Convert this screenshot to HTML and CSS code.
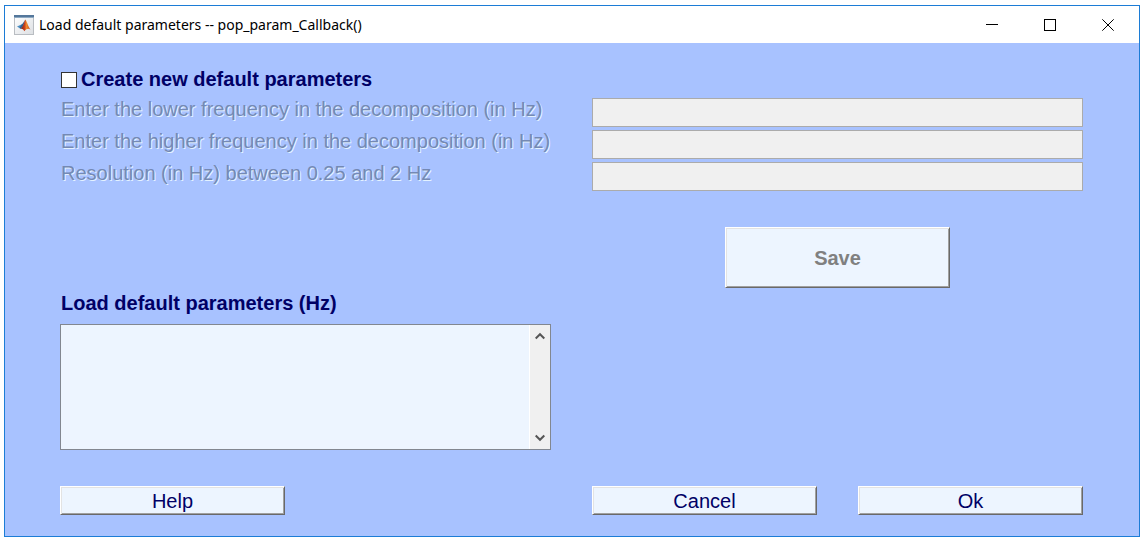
FILE: index.html
```html
<!DOCTYPE html>
<html lang="en">
<head>
<meta charset="utf-8">
<title>Load default parameters -- pop_param_Callback()</title>
<link rel="stylesheet" href="styles.css">
</head>
<body>
<main class="window">
  <header class="titlebar">
    <svg class="app-icon" viewBox="0 0 20 20" aria-hidden="true">
      <defs>
        <linearGradient id="paper" x1="0" y1="0" x2="1" y2="1"><stop offset="0" stop-color="#fff"/><stop offset="1" stop-color="#dcdfe3"/></linearGradient>
        <linearGradient id="flame" x1="0" y1="0" x2="1" y2="0"><stop offset="0" stop-color="#7a1f12"/><stop offset=".4" stop-color="#c8401c"/><stop offset=".6" stop-color="#f08a2c"/><stop offset="1" stop-color="#c5401a"/></linearGradient>
      </defs>
      <rect x=".5" y=".5" width="19" height="19" fill="url(#paper)" stroke="#b9bdc2"/>
      <rect width="20" height="2" fill="#54779b"/>
      <rect y="2" width="20" height="1" fill="#8da9c2"/>
      <path d="M3 11.600 7.500 9.400 9.400 10.800 6.600 13.800Z" fill="#4a8cc0"/>
      <path d="M7.500 9.400C9 9 9.800 6.500 11.300 4.800L9.400 10.800 6.600 13.800 5.600 13.100Z" fill="#2c6294"/>
      <path d="M11.300 4.600C13 6.500 14.200 12 16.500 14.600 14.500 13.200 13 13.200 10.300 16.200 9.500 14.500 8.500 13.400 6.600 13.800 9 12 10 8 11.300 4.600Z" fill="url(#flame)"/>
    </svg>
    <h1 class="title">Load default parameters -- pop_param_Callback()</h1>
    <div class="window-controls">
      <button class="window-button" type="button" aria-label="Minimize"><svg viewBox="0 0 12 12" shape-rendering="crispEdges"><path d="M0 5.500H12"/></svg></button>
      <button class="window-button" type="button" aria-label="Maximize"><svg viewBox="0 0 12 12" shape-rendering="crispEdges"><path d="M.5.5H11.500V11.500H.5Z"/></svg></button>
      <button class="window-button" type="button" aria-label="Close"><svg viewBox="0 0 12 12"><path d="M.3.3 11.700 11.700M11.700.3.3 11.700"/></svg></button>
    </div>
  </header>
  <form class="dialog">
    <label class="create"><input class="checkbox" type="checkbox">Create new default parameters</label>
    <div class="fields">
      <label class="field-label" for="low">Enter the lower frequency in the decomposition (in Hz)</label>
      <input class="field" id="low" type="text" disabled>
      <label class="field-label" for="high">Enter the higher frequency in the decomposition (in Hz)</label>
      <input class="field" id="high" type="text" disabled>
      <label class="field-label" for="resolution">Resolution (in Hz) between 0.25 and 2 Hz</label>
      <input class="field" id="resolution" type="text" disabled>
    </div>
    <div class="grid save-row">
      <button class="button save" type="button" disabled>Save</button>
    </div>
    <label class="list-label" for="params">Load default parameters (Hz)</label>
    <div class="grid list-row">
      <div class="list">
        <select class="list-box" id="params" size="5"></select>
        <div class="scrollbar">
          <button class="scroll-button" type="button" aria-label="Scroll up"><svg viewBox="0 0 10 8"><path d="M.7 6.500 5 2.200 9.300 6.500"/></svg></button>
          <button class="scroll-button" type="button" aria-label="Scroll down"><svg viewBox="0 0 10 8"><path d="M.7 1.500 5 5.800 9.300 1.500"/></svg></button>
        </div>
      </div>
    </div>
    <div class="grid actions">
      <button class="button help" type="button">Help</button>
      <button class="button cancel" type="button">Cancel</button>
      <button class="button" type="submit">Ok</button>
    </div>
  </form>
</main>
</body>
</html>
```
FILE: styles.css
```css
* { box-sizing: border-box; }

body {
  margin: 0;
  padding: 5px 5px 6px 4px;
  min-height: 100vh;
  display: flex;
  background: #fff;
  color: #000066;
  font: 20px/23px "Liberation Sans", Arial, sans-serif;
}

.window {
  flex: 1;
  display: flex;
  flex-direction: column;
  border: 1px solid #1c7cd6;
  background: #a8c2ff;
}

.titlebar {
  display: flex;
  align-items: center;
  height: 37px;
  padding-left: 9px;
  background: #fff;
  color: #000;
}

.app-icon { width: 20px; height: 20px; }

.title {
  flex: 1;
  margin: 0 0 0 5px;
  font: 14px/20px "Noto Sans", "Open Sans", sans-serif;
}

.window-controls { display: flex; padding-right: 2px; }

.window-button {
  display: flex;
  align-items: center;
  justify-content: center;
  width: 58px;
  height: 36px;
  padding: 0;
  border: 0;
  background: none;
}

.window-button svg {
  width: 12px;
  height: 12px;
  fill: none;
  stroke: #000;
}

.dialog {
  flex: 1;
  display: flex;
  flex-direction: column;
  padding: 25px 56px 21px 55px;
}

.create {
  display: flex;
  align-items: center;
  align-self: flex-start;
  gap: 4px;
  padding-left: 1px;
  font-weight: bold;
}

.checkbox {
  appearance: none;
  width: 16px;
  height: 16px;
  margin: 0;
  border: 1px solid #333;
  background: #fff;
}

.fields {
  display: grid;
  grid-template-columns: 1fr 1fr;
  gap: 3px 41px;
  margin-top: 7px;
}

.field-label {
  padding-left: 1px;
  color: #7489b4;
  text-shadow: 1px 1px 0 #e4f2ff;
  white-space: nowrap;
}

.field {
  width: 100%;
  height: 29px;
  padding: 0 4px;
  border: 1px solid #ababab;
  background: #f0f0f0;
  font: inherit;
}

.grid {
  display: grid;
  grid-template-columns: repeat(4, 1fr);
  column-gap: 41px;
}

.save-row { margin-top: 36px; }

.button {
  height: 29px;
  padding: 2px 0 0;
  border: 1px solid;
  border-color: #fff #696969 #696969 #fff;
  box-shadow: inset 1px 1px #e3e3e3, inset -1px -1px #a0a0a0;
  background: #edf5ff;
  color: #000066;
  font: inherit;
}

.save {
  grid-column: 3 / 5;
  justify-self: center;
  width: 46%;
  height: 61px;
  color: #808080;
  font-weight: bold;
}

.list-label {
  margin-top: 4px;
  padding-left: 1px;
  font-weight: bold;
}

.list-row { margin-top: 9px; }

.list {
  grid-column: 1 / 3;
  display: flex;
  height: 126px;
  border: 1px solid #828790;
  background: #edf5ff;
}

.list-box {
  flex: 1;
  min-width: 0;
  border: 0;
  background: transparent;
  color: inherit;
  font: inherit;
  overflow: hidden;
}

.scrollbar {
  display: flex;
  flex-direction: column;
  justify-content: space-between;
  width: 21px;
  border-left: 1px solid #fff;
  background: #f0f0f0;
}

.scroll-button {
  display: flex;
  align-items: center;
  justify-content: center;
  height: 22px;
  padding: 0;
  border: 0;
  background: none;
}

.scroll-button svg {
  width: 10px;
  height: 8px;
  fill: none;
  stroke: #555;
  stroke-width: 2;
}

.actions { margin-top: auto; }

.help { grid-column: 1; }

.cancel { grid-column: 3; }
```
